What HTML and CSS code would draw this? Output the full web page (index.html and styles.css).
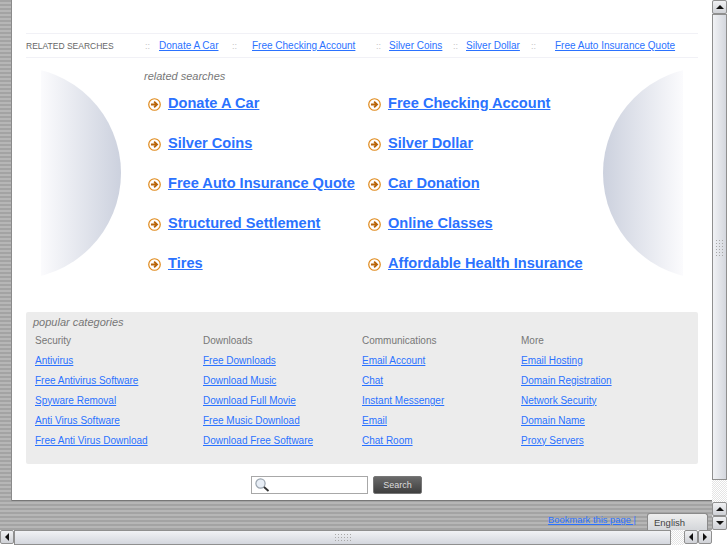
FILE: index.html
```html
<!DOCTYPE html>
<html lang="en">
<head>
    <meta charset="UTF-8">
    <meta name="viewport" content="width=device-width, initial-scale=1.0">
    <title>Related searches</title>
    <link rel="stylesheet" href="styles.css">
</head>
<body>
    <div class="frame">
        <div class="viewport">
            <div class="panel">
                <div class="related-bar">
                    <span class="related-label">RELATED SEARCHES</span>
                    <span class="sep">::</span><a href="#">Donate A Car</a>
                    <span class="sep">::</span><a href="#">Free Checking Account</a>
                    <span class="sep">::</span><a href="#">Silver Coins</a>
                    <span class="sep">::</span><a href="#">Silver Dollar</a>
                    <span class="sep">::</span><a href="#">Free Auto Insurance Quote</a>
                </div>

                <div class="results">
                    <div class="orb orb-left"></div>
                    <div class="results-main">
                        <div class="section-title">related searches</div>
                        <div class="results-grid">
                            <div class="result"><svg class="go" viewBox="0 0 14 14"><circle cx="7" cy="7" r="6.2"/><path d="M3.2 7h6M6.6 4 9.8 7 6.6 10"/></svg><a href="#">Donate A Car</a></div>
                            <div class="result"><svg class="go" viewBox="0 0 14 14"><circle cx="7" cy="7" r="6.2"/><path d="M3.2 7h6M6.6 4 9.8 7 6.6 10"/></svg><a href="#">Free Checking Account</a></div>
                            <div class="result"><svg class="go" viewBox="0 0 14 14"><circle cx="7" cy="7" r="6.2"/><path d="M3.2 7h6M6.6 4 9.8 7 6.6 10"/></svg><a href="#">Silver Coins</a></div>
                            <div class="result"><svg class="go" viewBox="0 0 14 14"><circle cx="7" cy="7" r="6.2"/><path d="M3.2 7h6M6.6 4 9.8 7 6.6 10"/></svg><a href="#">Silver Dollar</a></div>
                            <div class="result"><svg class="go" viewBox="0 0 14 14"><circle cx="7" cy="7" r="6.2"/><path d="M3.2 7h6M6.6 4 9.8 7 6.6 10"/></svg><a href="#">Free Auto Insurance Quote</a></div>
                            <div class="result"><svg class="go" viewBox="0 0 14 14"><circle cx="7" cy="7" r="6.2"/><path d="M3.2 7h6M6.6 4 9.8 7 6.6 10"/></svg><a href="#">Car Donation</a></div>
                            <div class="result"><svg class="go" viewBox="0 0 14 14"><circle cx="7" cy="7" r="6.2"/><path d="M3.2 7h6M6.6 4 9.8 7 6.6 10"/></svg><a href="#">Structured Settlement</a></div>
                            <div class="result"><svg class="go" viewBox="0 0 14 14"><circle cx="7" cy="7" r="6.2"/><path d="M3.2 7h6M6.6 4 9.8 7 6.6 10"/></svg><a href="#">Online Classes</a></div>
                            <div class="result"><svg class="go" viewBox="0 0 14 14"><circle cx="7" cy="7" r="6.2"/><path d="M3.2 7h6M6.6 4 9.8 7 6.6 10"/></svg><a href="#">Tires</a></div>
                            <div class="result"><svg class="go" viewBox="0 0 14 14"><circle cx="7" cy="7" r="6.2"/><path d="M3.2 7h6M6.6 4 9.8 7 6.6 10"/></svg><a href="#">Affordable Health Insurance</a></div>
                        </div>
                    </div>
                    <div class="orb orb-right"></div>
                </div>

                <div class="categories">
                    <div class="section-title">popular categories</div>
                    <div class="category-columns">
                        <div class="category">
                            <span>Security</span>
                            <a href="#">Antivirus</a>
                            <a href="#">Free Antivirus Software</a>
                            <a href="#">Spyware Removal</a>
                            <a href="#">Anti Virus Software</a>
                            <a href="#">Free Anti Virus Download</a>
                        </div>
                        <div class="category">
                            <span>Downloads</span>
                            <a href="#">Free Downloads</a>
                            <a href="#">Download Music</a>
                            <a href="#">Download Full Movie</a>
                            <a href="#">Free Music Download</a>
                            <a href="#">Download Free Software</a>
                        </div>
                        <div class="category">
                            <span>Communications</span>
                            <a href="#">Email Account</a>
                            <a href="#">Chat</a>
                            <a href="#">Instant Messenger</a>
                            <a href="#">Email</a>
                            <a href="#">Chat Room</a>
                        </div>
                        <div class="category">
                            <span>More</span>
                            <a href="#">Email Hosting</a>
                            <a href="#">Domain Registration</a>
                            <a href="#">Network Security</a>
                            <a href="#">Domain Name</a>
                            <a href="#">Proxy Servers</a>
                        </div>
                    </div>
                </div>

                <form class="search">
                    <div class="search-box">
                        <svg class="lens" viewBox="0 0 16 16"><circle cx="6.5" cy="6.5" r="4.6"/><path d="M10 10l4.5 4"/></svg>
                    </div>
                    <button type="button">Search</button>
                </form>
            </div>

            <div class="footer-bar">
                <a href="#">Bookmark this page |</a>
                <span class="lang-tab">English</span>
            </div>
        </div>

        <div class="vscroll">
            <div class="arrow-btn"><i class="tri tri-up"></i></div>
            <div class="vthumb"><div class="grip"></div></div>
            <div class="trough"></div>
            <div class="arrow-btn"><i class="tri tri-up"></i></div>
            <div class="arrow-btn"><i class="tri tri-down"></i></div>
        </div>
    </div>

    <div class="hscroll">
        <div class="arrow-btn"><i class="tri tri-left"></i></div>
        <div class="hthumb"><div class="grip"></div></div>
        <div class="trough"></div>
        <div class="arrow-btn"><i class="tri tri-left"></i></div>
        <div class="arrow-btn"><i class="tri tri-right"></i></div>
        <div class="corner"></div>
    </div>
</body>
</html>
```

FILE: styles.css
```css
body {
    margin: 0;
    width: 727px;
    height: 545px;
    overflow: hidden;
    background-color: #ffffff;
    font-family: "Liberation Sans", Arial, sans-serif;
    color: #777777;
}
a {
    color: #2b72ff;
}
.frame {
    display: flex;
    height: 530px;
}
.viewport {
    width: 712px;
    display: flex;
    flex-direction: column;
    background: repeating-linear-gradient(180deg, #a3a3a3 0, #a3a3a3 2px, #b6b6b6 2px, #b6b6b6 4px);
}
.panel {
    margin-left: 12px;
    height: 467px;
    padding: 33px 14px 0;
    background-color: #ffffff;
    border-bottom: 1px solid #777777;
    box-shadow: -1px 0 0 #8a8a8a;
}

/* Top strip */
.related-bar {
    display: grid;
    grid-template-columns: 119px 14px 73px 20px 124px 13px 64px 13px 65px 24px auto;
    align-items: center;
    height: 23px;
    border-top: 1px solid #f1f1f6;
    border-bottom: 1px solid #f1f1f6;
    font-size: 10px;
}
.related-bar a {
    justify-self: start;
}
.related-label {
    font-size: 8.5px;
    color: #666666;
}
.sep {
    color: #c4c4c4;
    font-size: 9px;
}

/* Large links with the round pictures */
.results {
    display: flex;
    margin-top: 11px;
    padding: 0 15px;
}
.orb {
    flex: none;
    width: 80px;
    height: 208px;
}
.orb-left {
    background: linear-gradient(90deg, #fbfbfd, #ccd1de);
    clip-path: circle(106px at -26px 50%);
}
.orb-right {
    background: linear-gradient(90deg, #ccd1de, #fbfbfd);
    clip-path: circle(106px at 106px 50%);
}
.results-main {
    flex: 1;
    padding-left: 23px;
}
.section-title {
    font-size: 11px;
    line-height: 14px;
    font-style: italic;
    color: #777777;
}
.results-grid {
    display: grid;
    grid-template-columns: 220px 220px;
    grid-auto-rows: 40px;
    padding-left: 4px;
}
.result {
    display: flex;
    align-items: center;
    gap: 7px;
    font-size: 14.6px;
    font-weight: bold;
    white-space: nowrap;
}
.go {
    flex: none;
    width: 13px;
    height: 13px;
    margin-top: 3px;
    fill: #ffffff;
    stroke: #e08a1c;
    stroke-width: 1.3;
}
.go path {
    fill: none;
    stroke: #b8650a;
    stroke-width: 1.9;
}

/* Popular categories */
.categories {
    margin-top: 29px;
    height: 149px;
    padding: 3px 0 0 7px;
    background-color: #ececec;
    border-radius: 2px;
}
.category-columns {
    display: grid;
    grid-template-columns: 168px 159px 159px auto;
    margin: 1px 0 0 2px;
}
.category {
    display: grid;
    grid-auto-rows: 20px;
    align-items: center;
    justify-items: start;
    font-size: 10px;
}

/* Search */
.search {
    display: flex;
    align-items: flex-start;
    gap: 5px;
    margin-top: 12px;
    padding-left: 225px;
}
.search-box {
    width: 115px;
    height: 16px;
    border: 1px solid #a8a8a8;
    background-color: #ffffff;
}
.lens {
    display: block;
    width: 16px;
    height: 16px;
    margin-left: 2px;
    fill: #e8eef6;
    stroke: #9aa4ae;
    stroke-width: 1.2;
}
.lens path {
    stroke: #333333;
    stroke-width: 1.8;
}
.search button {
    width: 49px;
    height: 18px;
    padding: 0;
    border: 1px solid #777777;
    border-radius: 2px;
    background: linear-gradient(180deg, #6a6a6a, #3f3f3f);
    color: #dddddd;
    font-family: "Liberation Sans", Arial, sans-serif;
    font-size: 9px;
}

/* Strip under the page */
.footer-bar {
    flex: 1;
    display: flex;
    justify-content: flex-end;
    align-items: flex-end;
    gap: 11px;
    padding-right: 4px;
    font-size: 9.4px;
}
.footer-bar a {
    margin-bottom: 5px;
}
.lang-tab {
    width: 61px;
    height: 17px;
    padding-left: 6px;
    box-sizing: border-box;
    line-height: 18px;
    border: 1px solid #8a8a8a;
    border-bottom: none;
    border-radius: 3px 3px 0 0;
    background: linear-gradient(180deg, #eeeeee, #d4d6da);
    color: #444444;
    font-size: 9.5px;
}

/* Scrollbars */
.vscroll {
    width: 15px;
    display: flex;
    flex-direction: column;
    background-color: #e9ebef;
}
.hscroll {
    display: flex;
    height: 15px;
}
.arrow-btn {
    flex: none;
    width: 14px;
    height: 14px;
    display: flex;
    align-items: center;
    justify-content: center;
    box-sizing: border-box;
    border: 1px solid #8f8f8f;
    border-radius: 2px;
    background: linear-gradient(180deg, #f0f1f3, #cfd1d6);
}
.vscroll .arrow-btn {
    width: 15px;
}
.vthumb {
    flex: none;
    height: 466px;
    display: flex;
    align-items: center;
    justify-content: center;
    box-sizing: border-box;
    border: 1px solid #8f8f8f;
    background: linear-gradient(90deg, #f1f2f5, #d4d7de);
}
.hthumb {
    flex: none;
    width: 657px;
    display: flex;
    align-items: center;
    justify-content: center;
    box-sizing: border-box;
    border: 1px solid #8f8f8f;
    background: linear-gradient(180deg, #f1f2f5, #d4d7de);
}
.trough {
    flex: 1;
    background: repeating-conic-gradient(#e4e4e4 0 25%, #ffffff 0 50%) 0 0 / 2px 2px;
}
.corner {
    flex: none;
    width: 15px;
    background-color: #ffffff;
}
.grip {
    width: 17px;
    height: 9px;
    background: radial-gradient(circle, #a8a8a8 1px, transparent 1px) 0 0 / 3px 3px;
}
.vthumb .grip {
    width: 10px;
    height: 17px;
}
.tri {
    width: 0;
    height: 0;
    border: 4px solid transparent;
}
.tri-up {
    border-top: none;
    border-bottom-color: #111111;
}
.tri-down {
    border-bottom: none;
    border-top-color: #111111;
}
.tri-left {
    border-left: none;
    border-right-color: #111111;
}
.tri-right {
    border-right: none;
    border-left-color: #111111;
}
```
